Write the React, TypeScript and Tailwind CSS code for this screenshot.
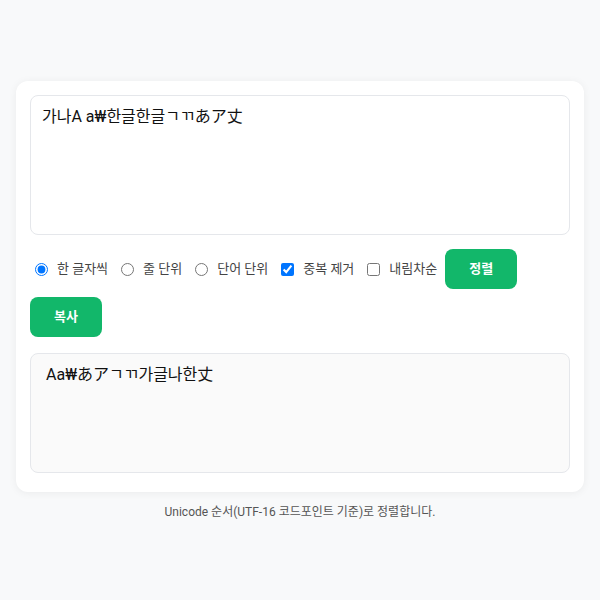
import { useState } from 'react';

type Mode = 'char' | 'line' | 'word';

const FONT = { fontFamily: 'Roboto, "Noto Sans CJK KR", sans-serif' };

export default function App() {
  const [input, setInput] = useState('가나A a₩한글한글ㄱㄲあア丈');
  const [mode, setMode] = useState<Mode>('char');
  const [dedupe, setDedupe] = useState(true);
  const [desc, setDesc] = useState(false);
  const [output, setOutput] = useState('Aa₩あアㄱㄲ가글나한丈');

  const sortText = () => {
    let parts: string[];
    if (mode === 'line') parts = input.split('\n');
    else if (mode === 'word') parts = input.split(/\s+/).filter(Boolean);
    else parts = Array.from(input).filter((c) => c.trim() !== '');
    if (dedupe) parts = Array.from(new Set(parts));
    parts.sort((a, b) => (a < b ? -1 : a > b ? 1 : 0));
    if (desc) parts.reverse();
    setOutput(parts.join(mode === 'line' ? '\n' : mode === 'word' ? ' ' : ''));
  };

  return (
    <div className="min-h-screen bg-[#f8f9fa] px-4 pt-[81px]" style={FONT}>
      <div className="rounded-xl bg-white px-[14px] pt-[14px] pb-[19px] shadow-[0_1px_8px_rgba(0,0,0,0.06)]">
        <textarea
          value={input}
          onChange={(e) => setInput(e.target.value)}
          className="block h-[140px] w-full resize-none rounded-lg border border-[#e5e7eb] px-[11px] py-[9px] text-base leading-6 text-[#111] outline-none"
        />

        <div className="mt-[14px] flex flex-wrap items-center gap-2 text-[13px] text-[#444]">
          <label className="flex items-center gap-1.5">
            <input type="radio" name="mode" className="ml-[5px] mr-[3px]" checked={mode === 'char'} onChange={() => setMode('char')} />
            한 글자씩
          </label>
          <label className="flex items-center gap-1.5">
            <input type="radio" name="mode" className="ml-[5px] mr-[3px]" checked={mode === 'line'} onChange={() => setMode('line')} />
            줄 단위
          </label>
          <label className="flex items-center gap-1.5">
            <input type="radio" name="mode" className="ml-[5px] mr-[3px]" checked={mode === 'word'} onChange={() => setMode('word')} />
            단어 단위
          </label>
          <label className="flex items-center gap-1.5">
            <input type="checkbox" className="ml-[5px] mr-[3px]" checked={dedupe} onChange={(e) => setDedupe(e.target.checked)} />
            중복 제거
          </label>
          <label className="flex items-center gap-1.5">
            <input type="checkbox" className="ml-[5px] mr-[3px]" checked={desc} onChange={(e) => setDesc(e.target.checked)} />
            내림차순
          </label>
          <button
            onClick={sortText}
            className="h-10 w-[72px] rounded-lg bg-[#12b76a] text-[13px] font-bold text-white"
          >
            정렬
          </button>
          <button
            onClick={() => navigator.clipboard?.writeText(output)}
            className="h-10 w-[72px] rounded-lg bg-[#12b76a] text-[13px] font-bold text-white"
          >
            복사
          </button>
        </div>

        <div className="mt-4 h-[120px] whitespace-pre-wrap rounded-lg border border-[#e5e7eb] bg-[#fafafa] px-[15px] py-[9px] text-base leading-6 text-[#111]">
          {output}
        </div>
      </div>

      <p className="mt-[12px] text-center text-xs text-[#555]">
        Unicode 순서(UTF-16 코드포인트 기준)로 정렬합니다.
      </p>
    </div>
  );
}
